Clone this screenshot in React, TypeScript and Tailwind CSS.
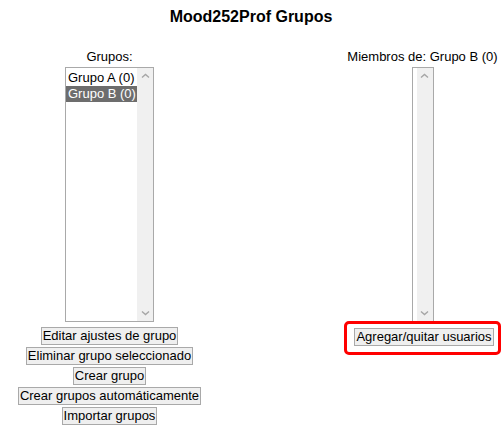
import React from "react";

const font = { fontFamily: '"Liberation Sans", Arial, sans-serif' };

function Chevron({ down }: { down?: boolean }) {
  return (
    <svg width="9" height="6" viewBox="0 0 9 6" className="block">
      <path
        d={down ? "M1 1.5 L4.5 4.5 L8 1.5" : "M1 4.5 L4.5 1.5 L8 4.5"}
        fill="none"
        stroke="#a6a6a6"
        strokeWidth="1.4"
      />
    </svg>
  );
}

function ListBox({ items, selected, width }: { items: string[]; selected?: number; width: string }) {
  return (
    <div className={`flex h-[255px] ${width} border border-[#a9a9a9] bg-white`}>
      <div className="flex flex-1 flex-col pt-[2px]">
        {items.map((it, i) => (
          <div
            key={it}
            className={`h-[16px] pl-[2px] pr-[1px] leading-[16px] whitespace-nowrap ${
              i === selected ? "bg-[#6d6d6d] text-white" : "text-black"
            }`}
          >
            {it}
          </div>
        ))}
      </div>
      <div className="flex w-[16px] flex-col items-center justify-between bg-[#f0f0f0] py-[5px]">
        <Chevron />
        <Chevron down />
      </div>
    </div>
  );
}

function Btn({ children }: { children: React.ReactNode }) {
  return (
    <button className="h-[18px] border border-[#a9a9a9] bg-[#efefef] px-[1px] leading-[16px] text-black">
      {children}
    </button>
  );
}

export default function App() {
  return (
    <div className="h-[433px] w-[502px] bg-white text-[13px]" style={font}>
      <h1 className="pt-[8px] text-center text-[16px] leading-[18px] font-bold">Mood252Prof Grupos</h1>
      <div className="mt-[23px] flex">
        <div className="flex w-[219px] flex-col items-center">
          <div className="leading-[15px]">Grupos:</div>
          <div className="mt-[3px]">
            <ListBox items={["Grupo A (0)", "Grupo B (0)"]} selected={1} width="w-[89px]" />
          </div>
          <div className="mt-[5px] flex flex-col items-center gap-[2px]">
            <Btn>Editar ajustes de grupo</Btn>
            <Btn>Eliminar grupo seleccionado</Btn>
            <Btn>Crear grupo</Btn>
            <Btn>Crear grupos automáticamente</Btn>
            <Btn>Importar grupos</Btn>
          </div>
        </div>
        <div className="ml-auto flex w-[159px] flex-col items-center">
          <div className="leading-[15px] whitespace-nowrap">Miembros de: Grupo B (0)</div>
          <div className="mt-[3px]">
            <div className="flex h-[255px] w-[22px] border border-[#a9a9a9] bg-white pl-[4px]">
              <div className="flex w-[16px] flex-col items-center justify-between bg-[#f0f0f0] py-[5px]">
                <Chevron />
                <Chevron down />
              </div>
            </div>
          </div>
          <div className="mt-[-1px] rounded-[5px] border-[3px] border-[#ff0000] pt-[3px] pr-[4px] pb-[5px] pl-[7px]">
            <Btn>Agregar/quitar usuarios</Btn>
          </div>
        </div>
      </div>
    </div>
  );
}
